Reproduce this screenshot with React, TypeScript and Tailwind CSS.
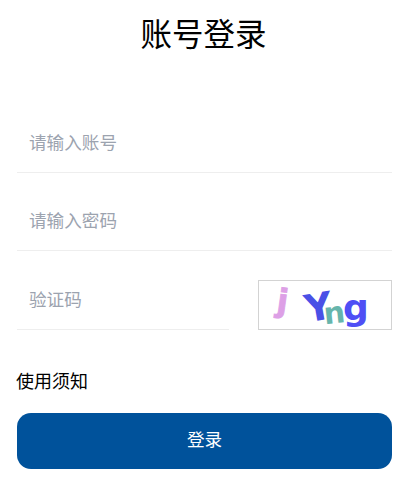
export default function App() {
  return (
    <div className="w-[407px] h-[483px] bg-white overflow-hidden font-['Noto_Sans_CJK_SC','Liberation_Sans',sans-serif] text-black">
      <h1 className="h-[34px] mt-[15px] text-center text-[31.5px] leading-[34px] font-normal">账号登录</h1>
      <div className="pl-[17px] pr-[15px] mt-[55px]">
        <div className="h-[69px] pt-[8px] border-b border-[#eeeeee] flex items-center pl-[12px]">
          <input placeholder="请输入账号" className="w-full outline-none text-[17.6px] placeholder:text-[#9ca3af]" />
        </div>
        <div className="h-[78px] pt-[17px] border-b border-[#eeeeee] flex items-center pl-[12px]">
          <input placeholder="请输入密码" className="w-full outline-none text-[17.6px] placeholder:text-[#9ca3af]" />
        </div>
        <div className="flex justify-between items-end h-[79px]">
          <div className="w-[212px] h-[70px] pt-[10px] border-b border-[#eeeeee] flex items-center pl-[12px]">
            <input placeholder="验证码" className="w-full outline-none text-[17.6px] placeholder:text-[#9ca3af]" />
          </div>
          <div className="w-[134px] h-[50px] border border-[#d3d3d3]">
            <svg width="132" height="48" viewBox="0 0 132 48">
              <text x="18" y="31" fontSize="32" fontFamily="DejaVu Sans" fontWeight="700" fill="#dda0e6" stroke="#dda0e6" strokeWidth="0.8" transform="rotate(8 24 22)">j</text>
              <text x="46" y="39" fontSize="38" fontFamily="DejaVu Sans" fontWeight="700" fill="#4a50e6" transform="rotate(-10 62 28)">Y</text>
              <text x="65" y="42" fontSize="30" fontFamily="DejaVu Sans" fontWeight="700" fill="#66b5ac" transform="rotate(-6 77 36)">n</text>
              <text x="84" y="39" fontSize="36" fontFamily="DejaVu Sans" fontWeight="700" fill="#4f4ff5">g</text>
            </svg>
          </div>
        </div>
        <div className="mt-[37px] -ml-px text-[18px] leading-[26px]">使用须知</div>
        <button className="mt-[20px] pb-[4px] w-full h-[56px] rounded-[14px] bg-[#00529b] text-white text-[17.6px]">登录</button>
      </div>
    </div>
  );
}
